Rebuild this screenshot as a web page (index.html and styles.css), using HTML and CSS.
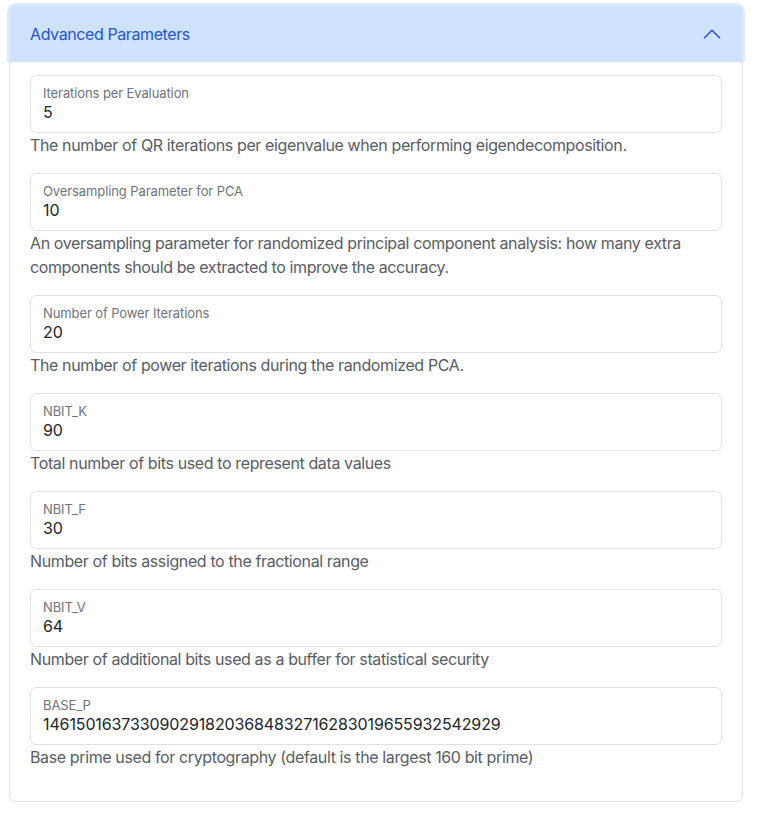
FILE: index.html
```html
<!DOCTYPE html>
<html>
<head>
<meta charset="utf-8">
<link rel="stylesheet" href="styles.css">
</head>
<body>
<div class="page">
  <div class="accordion">
    <div class="acc-header">
      <span class="acc-title">Advanced Parameters</span>
      <svg class="chev" width="20" height="20" viewBox="0 0 16 16" fill="none"><path d="M2 11 L8 5 L14 11" stroke="#2456cc" stroke-width="1.2" stroke-linecap="round" stroke-linejoin="round"/></svg>
    </div>
    <div class="acc-body">
      <div class="group">
        <div class="field"><div class="label">Iterations per Evaluation</div><div class="value">5</div></div>
        <div class="help">The number of QR iterations per eigenvalue when performing eigendecomposition.</div>
      </div>
      <div class="group">
        <div class="field"><div class="label">Oversampling Parameter for PCA</div><div class="value">10</div></div>
        <div class="help">An oversampling parameter for randomized principal component analysis: how many extra components should be extracted to improve the accuracy.</div>
      </div>
      <div class="group">
        <div class="field"><div class="label">Number of Power Iterations</div><div class="value">20</div></div>
        <div class="help">The number of power iterations during the randomized PCA.</div>
      </div>
      <div class="group">
        <div class="field"><div class="label">NBIT_K</div><div class="value">90</div></div>
        <div class="help">Total number of bits used to represent data values</div>
      </div>
      <div class="group">
        <div class="field"><div class="label">NBIT_F</div><div class="value">30</div></div>
        <div class="help">Number of bits assigned to the fractional range</div>
      </div>
      <div class="group">
        <div class="field"><div class="label">NBIT_V</div><div class="value">64</div></div>
        <div class="help">Number of additional bits used as a buffer for statistical security</div>
      </div>
      <div class="group">
        <div class="field"><div class="label">BASE_P</div><div class="value">1461501637330902918203684832716283019655932542929</div></div>
        <div class="help">Base prime used for cryptography (default is the largest 160 bit prime)</div>
      </div>
    </div>
  </div>
</div>
</body>
</html>
```

FILE: styles.css
```css
* { box-sizing: border-box; }
body {
  margin: 0;
  background: #ffffff;
  font-family: Inter, "Noto Sans", sans-serif;
  color: #212529;
}
.page {
  padding: 5px 17px 0 9px;
}
.accordion {
  width: 734px;
  border: 1px solid #dee2e6;
  border-radius: 7px;
  background: #fff;
}
.acc-header {
  height: 56px;
  background: #cfe2ff;
  border-radius: 6px 6px 0 0;
  display: flex;
  align-items: center;
  justify-content: space-between;
  padding: 0 20px;
  box-shadow: 0 0 0 3px #dde9fc;
  clip-path: inset(-4px -4px 0 -4px round 8px 8px 0 0);
  position: relative;
}
.acc-title {
  font-size: 16px;
  color: #2456cc;
  letter-spacing: -0.4px;
}
.chev { display: block; }
.acc-body {
  padding: 13px 20px 16px 20px;
}
.group {
  margin-bottom: 16px;
}
.field {
  height: 58px;
  border: 1px solid #dee2e6;
  border-radius: 6px;
  padding: 8px 12px 10px 12px;
}
.label {
  font-size: 13px;
  line-height: 18px;
  color: #6f7479;
  letter-spacing: -0.1px;
}
.value {
  font-size: 16px;
  line-height: 20px;
  color: #212529;
  letter-spacing: -0.12px;
}
.help {
  font-size: 16px;
  line-height: 24px;
  color: #595d62;
  letter-spacing: -0.38px;
}
```
